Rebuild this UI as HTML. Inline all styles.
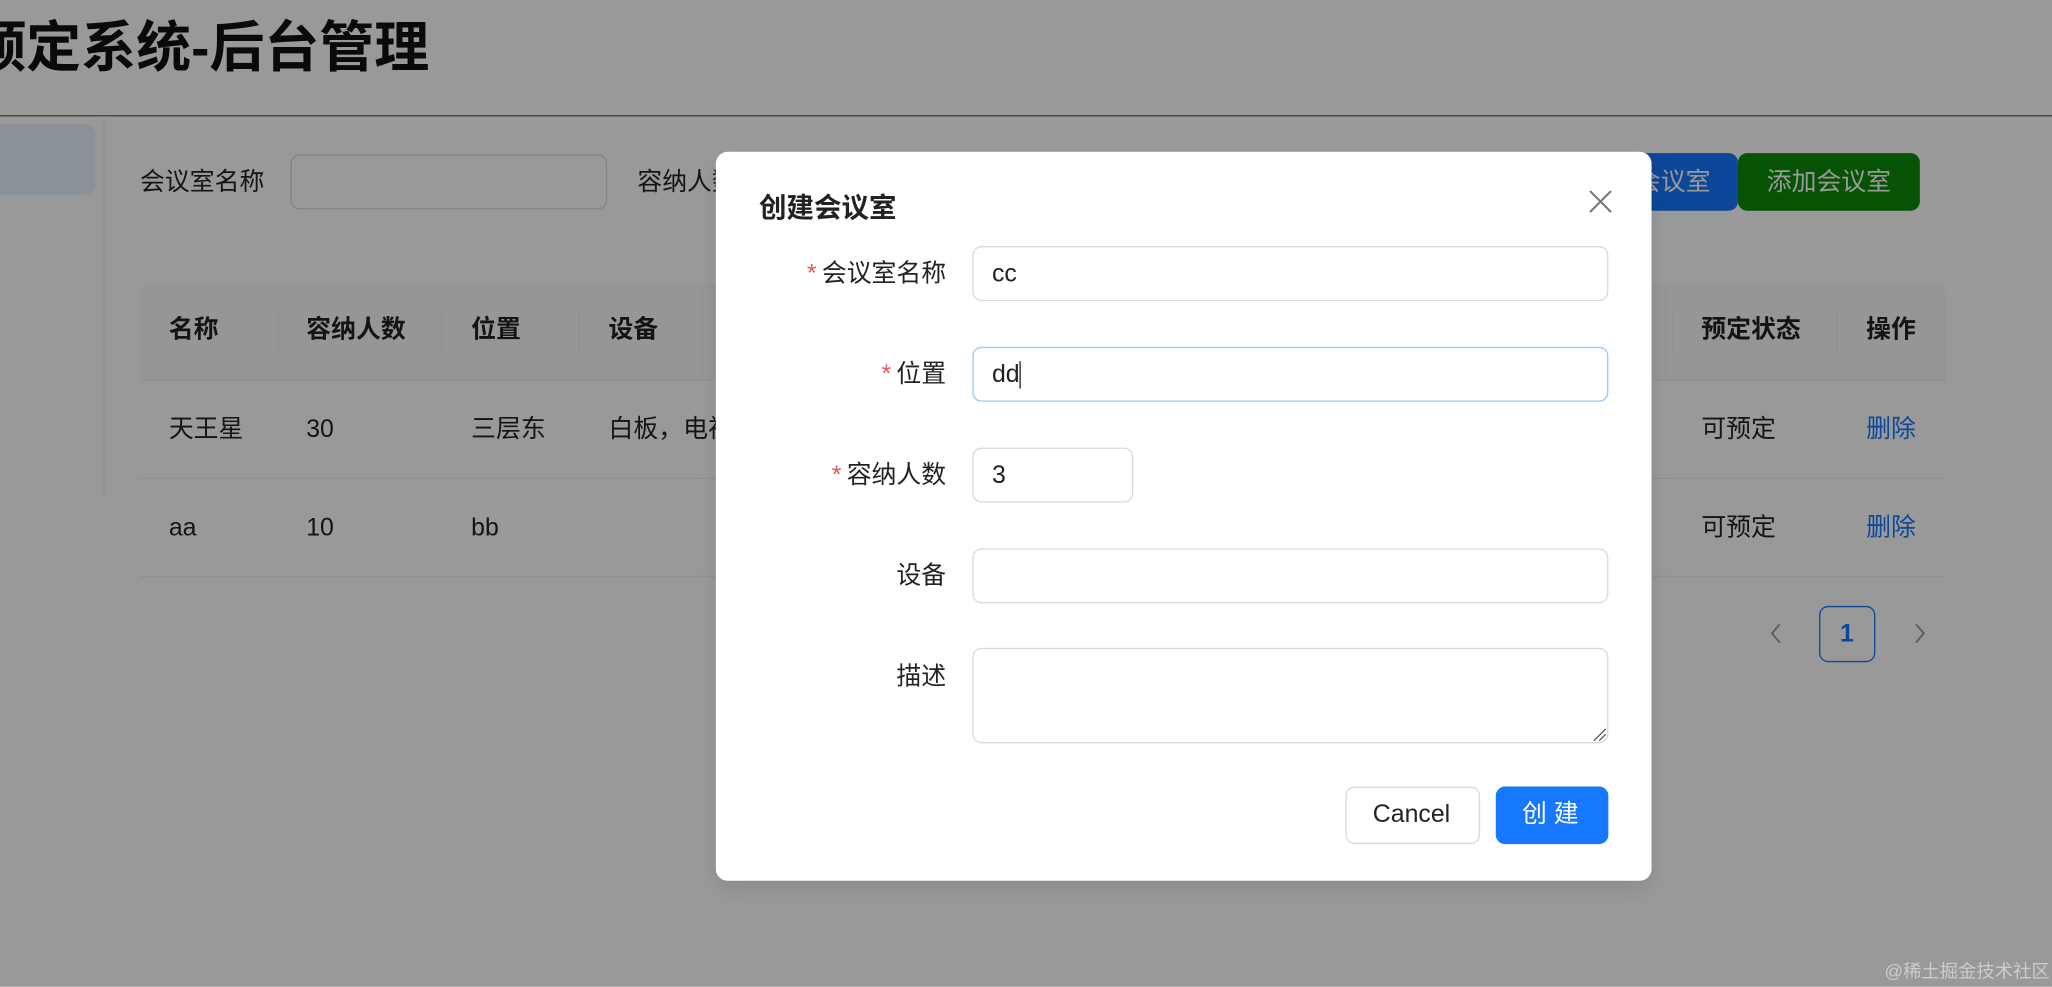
<!DOCTYPE html>
<html><head><meta charset="utf-8"><style>
*{box-sizing:border-box;margin:0;padding:0}
html,body{width:2052px;height:986px;overflow:hidden;background:#fff}
body{font-family:"Liberation Sans","Noto Sans CJK SC",sans-serif;color:#222}
#w{position:absolute;left:0;top:0;width:1568px;height:754px;transform:scale(1.30868);transform-origin:0 0}
.a{position:absolute}
.t{position:absolute;font-size:19px;line-height:22px;white-space:nowrap}
.th{font-weight:bold}
#ov{position:absolute;left:0;top:0;width:1568px;height:754px;background:rgba(0,0,0,0.4)}
.inp{position:absolute;left:743px;width:486px;height:42px;border:1px solid #d9d9d9;border-radius:7px;background:#fff}
.lbl{position:absolute;right:845px;font-size:19px;line-height:22px;white-space:nowrap;color:#222}
.st{color:#e0575b;margin-right:4px}
</style></head><body><div id="w">
<div class="t" style="left:-22px;top:13px;font-size:42px;line-height:48px;font-weight:bold;color:#111">预定系统-后台管理</div>
<div class="a" style="left:0;top:88px;width:1568px;height:1px;background:#666"></div>
<div class="a" style="left:-10px;top:95px;width:83px;height:54px;background:#e6f4ff;border-radius:8px"></div>
<div class="a" style="left:79px;top:90px;width:1px;height:290px;background:#eee"></div>
<div class="t" style="left:107px;top:129px">会议室名称</div>
<div class="a" style="left:222px;top:118px;width:242px;height:42px;border:1px solid #d9d9d9;border-radius:7px"></div>
<div class="t" style="left:487px;top:129px">容纳人数</div>
<div class="a" style="left:1200px;top:117px;width:128px;height:44px;background:#1677ff;border-radius:7px"></div>
<div class="t" style="left:1250px;top:129px;color:#fff">会议室</div>
<div class="a" style="left:1328px;top:117px;width:139px;height:44px;background:#0a8a0a;border-radius:7px"></div>
<div class="t" style="left:1350px;top:129px;color:#fff">添加会议室</div>
<div class="a" style="left:107px;top:217px;width:1380px;height:74px;background:#fafafa;border-radius:8px 8px 0 0;border-bottom:1px solid #f0f0f0"></div>
<div class="a" style="left:212px;top:238px;width:1px;height:32px;background:#eee"></div>
<div class="a" style="left:337px;top:238px;width:1px;height:32px;background:#eee"></div>
<div class="a" style="left:442px;top:238px;width:1px;height:32px;background:#eee"></div>
<div class="a" style="left:1278px;top:238px;width:1px;height:32px;background:#eee"></div>
<div class="a" style="left:1403px;top:238px;width:1px;height:32px;background:#eee"></div>
<div class="t th" style="left:129px;top:242px">名称</div>
<div class="t th" style="left:234px;top:242px">容纳人数</div>
<div class="t th" style="left:360px;top:242px">位置</div>
<div class="t th" style="left:465px;top:242px">设备</div>
<div class="t th" style="left:1300px;top:242px">预定状态</div>
<div class="t th" style="left:1426px;top:242px">操作</div>
<div class="t" style="left:129px;top:318px">天王星</div><div class="t" style="left:234px;top:318px">30</div><div class="t" style="left:360px;top:318px">三层东</div><div class="t" style="left:465px;top:318px">白板，电视</div><div class="t" style="left:1300px;top:318px">可预定</div><div class="t" style="left:1426px;top:318px;color:#1677ff">删除</div>
<div class="a" style="left:107px;top:365px;width:1380px;height:1px;background:#f0f0f0"></div>
<div class="t" style="left:129px;top:393px">aa</div><div class="t" style="left:234px;top:393px">10</div><div class="t" style="left:360px;top:393px">bb</div><div class="t" style="left:1300px;top:393px">可预定</div><div class="t" style="left:1426px;top:393px;color:#1677ff">删除</div>
<div class="a" style="left:107px;top:440px;width:1380px;height:1px;background:#f0f0f0"></div>
<svg class="a" style="left:1351px;top:476px" width="12" height="16"><path d="M9 1L3 8L9 15" stroke="#999" stroke-width="1.4" fill="none"/></svg>
<div class="a" style="left:1390px;top:463px;width:43px;height:43px;border:1px solid #1677ff;border-radius:7px"></div>
<div class="t" style="left:1406px;top:474px;color:#1677ff;font-weight:bold">1</div>
<svg class="a" style="left:1461px;top:476px" width="12" height="16"><path d="M3 1L9 8L3 15" stroke="#999" stroke-width="1.4" fill="none"/></svg>
<div id="ov"></div>
<div class="t" style="left:1440px;top:731px;font-size:14px;color:#ccc">@稀土掘金技术社区</div>
<div class="a" style="left:547px;top:116px;width:715px;height:557px;background:#fff;border-radius:9px;box-shadow:0 6px 16px rgba(0,0,0,0.1)"></div>
<div class="t" style="left:580px;top:148px;font-size:21px;line-height:24px;font-weight:bold;color:#222">创建会议室</div>
<svg class="a" style="left:1214px;top:145px" width="18" height="18" viewBox="0 0 18 18"><path d="M1 1L17 17M17 1L1 17" stroke="#777" stroke-width="1.6"/></svg>
<div class="lbl" style="top:199px"><span class="st">*</span>会议室名称</div>
<div class="inp" style="top:188px"></div><div class="t" style="left:758px;top:199px">cc</div>
<div class="lbl" style="top:276px"><span class="st">*</span>位置</div>
<div class="inp" style="top:265px;border-color:#91caff"></div><div class="t" style="left:758px;top:276px">dd<span style="border-left:1.5px solid #222"></span></div>
<div class="lbl" style="top:353px"><span class="st">*</span>容纳人数</div>
<div class="inp" style="top:342px;width:123px"></div><div class="t" style="left:758px;top:353px">3</div>
<div class="lbl" style="top:430px">设备</div>
<div class="inp" style="top:419px"></div>
<div class="lbl" style="top:507px">描述</div>
<div class="inp" style="top:495px;height:73px"></div>
<svg class="a" style="left:1216px;top:555px" width="12" height="12"><path d="M2 11L11 2M6 11L11 6" stroke="#555" stroke-width="1"/></svg>
<div class="a" style="left:1028px;top:601px;width:103px;height:44px;border:1px solid #d9d9d9;border-radius:7px;background:#fff"></div>
<div class="t" style="left:1049px;top:612px">Cancel</div>
<div class="a" style="left:1143px;top:601px;width:86px;height:44px;border-radius:7px;background:#1677ff"></div>
<div class="t" style="left:1163px;top:612px;color:#fff">创 建</div>
</div></body></html>
